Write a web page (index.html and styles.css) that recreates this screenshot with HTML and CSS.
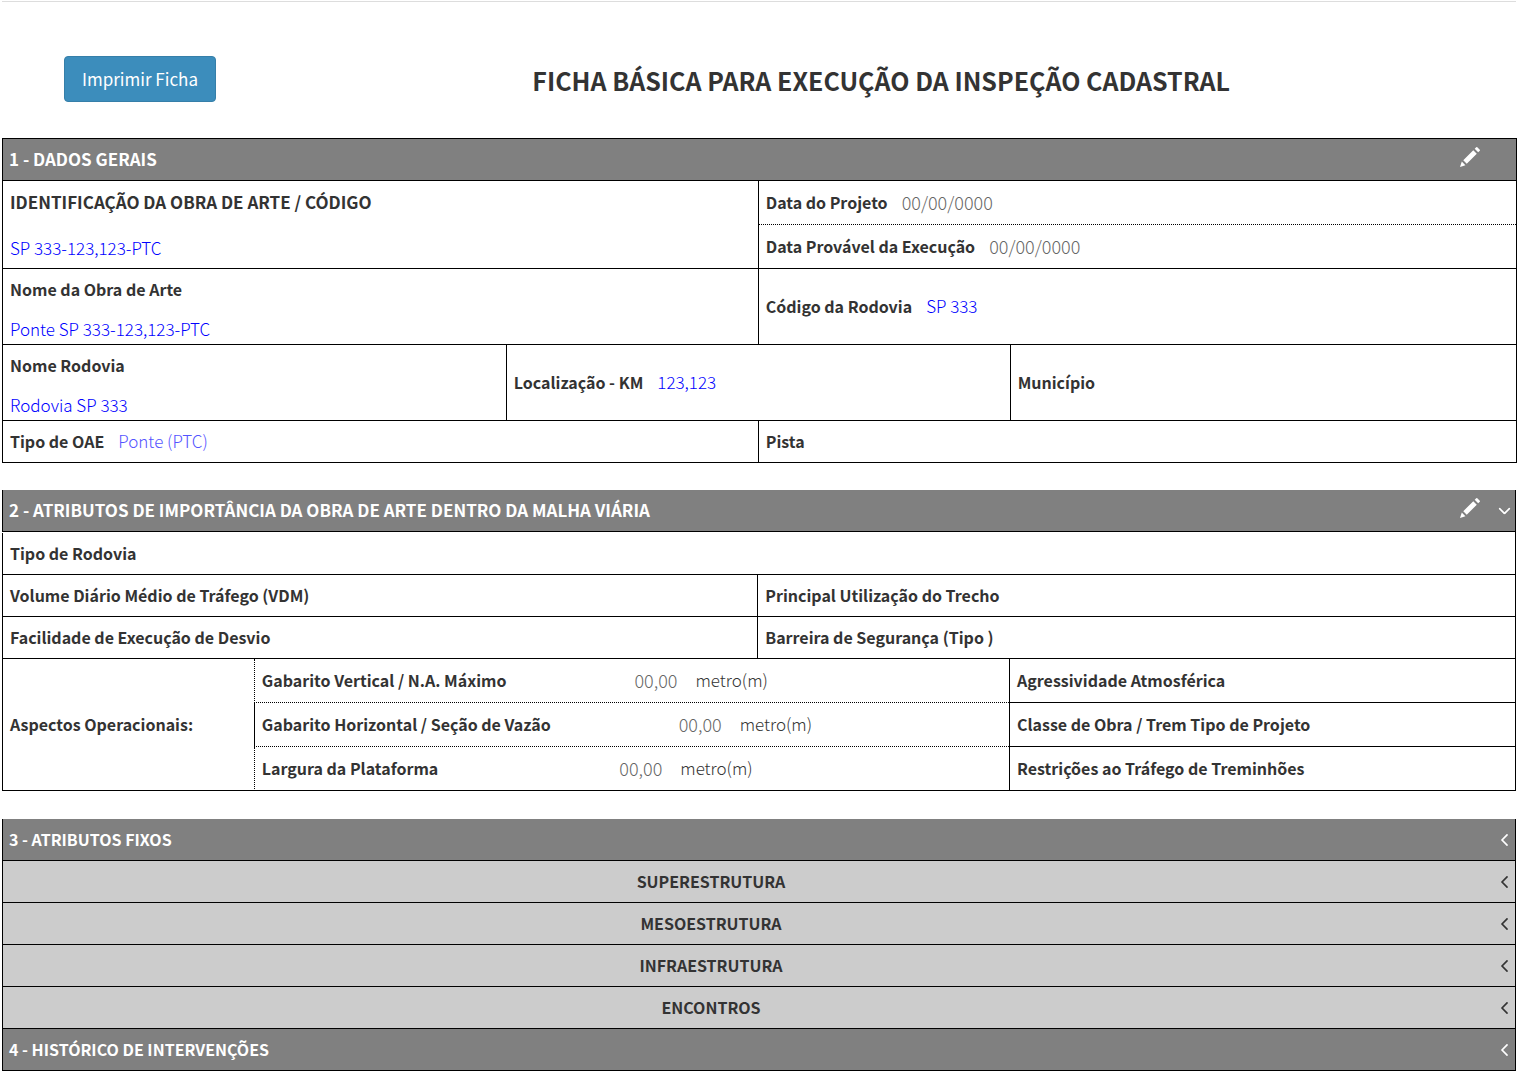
FILE: index.html
```html
<!DOCTYPE html>
<html lang="pt-BR">
<head>
<meta charset="utf-8">
<meta name="viewport" content="width=device-width, initial-scale=1">
<title>Ficha Básica - Inspeção Cadastral</title>
<link rel="stylesheet" href="styles.css">
</head>
<body>
<svg class="sprite" aria-hidden="true">
  <symbol id="pencil" viewBox="-16 -1210 1226 1226"><path transform="scale(1 -1)" d="M1011 1210q19 0 33 -13l153 -153q13 -14 13 -33t-13 -33l-99 -92l-214 214l95 96q13 14 32 14zM1013 800l-615 -614l-214 214l614 614zM317 96l-333 -112l110 335z"/></symbol>
  <symbol id="angle-left" viewBox="45 -1075 582 998"><path transform="scale(1 -1)" d="M627 992q0 -13 -10 -23l-393 -393l393 -393q10 -10 10 -23t-10 -23l-50 -50q-10 -10 -23 -10t-23 10l-466 466q-10 10 -10 23t10 23l466 466q10 10 23 10t23 -10l50 -50q10 -10 10 -23z"/></symbol>
</svg>
<main class="page">
  <header class="top">
    <div class="print"><button class="btn" type="button">Imprimir Ficha</button></div>
    <h1>FICHA BÁSICA PARA EXECUÇÃO DA INSPEÇÃO CADASTRAL</h1>
  </header>

  <section class="sheet general">
    <div class="bar">
      <h2 class="large">1 - DADOS GERAIS</h2>
      <button class="icon edit" type="button" aria-label="Editar"><svg><use href="#pencil"/></svg></button>
    </div>
    <div class="grid">
      <div class="cell half two-lines tall stacked">
        <label class="large" for="codigo">IDENTIFICAÇÃO DA OBRA DE ARTE / CÓDIGO</label>
        <input id="codigo" class="value" value="SP 333-123,123-PTC">
      </div>
      <div class="half split">
        <div class="cell line dotted"><label for="projeto">Data do Projeto</label><input id="projeto" class="value" placeholder="00/00/0000"></div>
        <div class="cell line"><label for="execucao">Data Provável da Execução</label><input id="execucao" class="value" placeholder="00/00/0000"></div>
      </div>
      <div class="cell half two-lines stacked">
        <label for="nome">Nome da Obra de Arte</label>
        <input id="nome" class="value" value="Ponte SP 333-123,123-PTC">
      </div>
      <div class="cell half"><label for="rodovia">Código da Rodovia</label><input id="rodovia" class="value" value="SP 333"></div>
      <div class="cell third two-lines stacked">
        <label for="nome-rodovia">Nome Rodovia</label>
        <input id="nome-rodovia" class="value" value="Rodovia SP 333">
      </div>
      <div class="cell third"><label for="km">Localização - KM</label><input id="km" class="value" value="123,123"></div>
      <div class="cell third"><span class="name">Município</span></div>
      <div class="cell half"><label for="tipo">Tipo de OAE</label><input id="tipo" class="value" value="Ponte (PTC)" disabled></div>
      <div class="cell half"><span class="name">Pista</span></div>
    </div>
  </section>

  <section class="sheet">
    <div class="bar detached">
      <h2 class="large">2 - ATRIBUTOS DE IMPORTÂNCIA DA OBRA DE ARTE DENTRO DA MALHA VIÁRIA</h2>
      <button class="icon edit" type="button" aria-label="Editar"><svg><use href="#pencil"/></svg></button>
      <button class="icon angle open" type="button" aria-label="Recolher"><svg><use href="#angle-left"/></svg></button>
    </div>
    <div class="grid">
      <div class="cell full"><span class="name">Tipo de Rodovia</span></div>
      <div class="cell half"><span class="name">Volume Diário Médio de Tráfego (VDM)</span></div>
      <div class="cell half"><span class="name">Principal Utilização do Trecho</span></div>
      <div class="cell half"><span class="name">Facilidade de Execução de Desvio</span></div>
      <div class="cell half"><span class="name">Barreira de Segurança (Tipo )</span></div>
      <div class="cell sixth"><span class="name">Aspectos Operacionais:</span></div>
      <div class="half split">
        <div class="cell line dotted dotted-side"><label for="vertical">Gabarito Vertical / N.A. Máximo</label><input id="vertical" class="value measure" placeholder="00,00"><span class="unit">metro(m)</span></div>
        <div class="cell line dotted"><label for="horizontal">Gabarito Horizontal / Seção de Vazão</label><input id="horizontal" class="value measure" placeholder="00,00"><span class="unit">metro(m)</span></div>
        <div class="cell line dotted-side"><label for="largura">Largura da Plataforma</label><input id="largura" class="value measure wide" placeholder="00,00"><span class="unit">metro(m)</span></div>
      </div>
      <div class="third split">
        <div class="cell line"><span class="name">Agressividade Atmosférica</span></div>
        <div class="cell line"><span class="name">Classe de Obra / Trem Tipo de Projeto</span></div>
        <div class="cell line"><span class="name">Restrições ao Tráfego de Treminhões</span></div>
      </div>
    </div>
  </section>

  <section class="sheet">
    <div class="bar">
      <h2>3 - ATRIBUTOS FIXOS</h2>
      <button class="icon angle" type="button" aria-label="Expandir"><svg><use href="#angle-left"/></svg></button>
    </div>
    <div class="bar sub">
      <h3>SUPERESTRUTURA</h3>
      <button class="icon angle" type="button" aria-label="Expandir"><svg><use href="#angle-left"/></svg></button>
    </div>
    <div class="bar sub">
      <h3>MESOESTRUTURA</h3>
      <button class="icon angle" type="button" aria-label="Expandir"><svg><use href="#angle-left"/></svg></button>
    </div>
    <div class="bar sub">
      <h3>INFRAESTRUTURA</h3>
      <button class="icon angle" type="button" aria-label="Expandir"><svg><use href="#angle-left"/></svg></button>
    </div>
    <div class="bar sub">
      <h3>ENCONTROS</h3>
      <button class="icon angle" type="button" aria-label="Expandir"><svg><use href="#angle-left"/></svg></button>
    </div>
    <div class="bar">
      <h2>4 - HISTÓRICO DE INTERVENÇÕES</h2>
      <button class="icon angle" type="button" aria-label="Expandir"><svg><use href="#angle-left"/></svg></button>
    </div>
  </section>
</main>
</body>
</html>
```
FILE: styles.css
```css
* { box-sizing: border-box; }

body {
  margin: 0;
  background: #fff;
  color: #333;
  font: 17px/24px "Noto Sans CJK SC", "Liberation Sans", sans-serif;
}

.sprite { display: none; }

.page { padding: 1px 11px 14px 2px; }

/* page heading */
.top {
  display: grid;
  grid-template-columns: 1fr 5fr;
  align-items: start;
  padding: 54px 0 36px;
  border-top: 1px solid #ddd;
}

.print { padding-left: 62px; }

.btn {
  height: 46px;
  padding: 0 17px;
  border: 1px solid #367fa9;
  border-radius: 4px;
  background: #3c8dbc;
  color: #fff;
  font: 17px/24px "Noto Sans CJK SC", sans-serif;
  white-space: nowrap;
}

h1 {
  margin: 6px 8px 0 0;
  font: bold 25px/36px "Noto Sans CJK SC", sans-serif;
  text-align: center;
}

/* sheets */
.sheet {
  margin-bottom: 28px;
  border-right: 1px solid #000;
}

.sheet:last-child { margin-bottom: 0; }

.general {
  margin: 0 -1px 27px 0;
  border-top: 1px solid #000;
}

.bar {
  display: flex;
  align-items: center;
  height: 42px;
  padding: 0 7px 0 6px;
  border-left: 1px solid #000;
  border-bottom: 1px solid #000;
  background: #808080;
  color: #fff;
}

.detached { margin-bottom: 1px; }

h2, h3 {
  flex: 1;
  margin: 0;
  padding-bottom: 2px;
  font-size: 16px;
  line-height: 24px;
  font-weight: bold;
}

.sub {
  background: #ccc;
  color: #333;
}

h3 {
  padding-right: 88px;
  text-align: center;
}

.icon {
  display: flex;
  justify-content: center;
  padding: 0;
  border: 0;
  background: none;
  color: inherit;
}

.icon svg { fill: currentColor; }

.edit { margin: 0 29px 6px 0; }
.edit svg { width: 20px; height: 20px; }
.edit:not(:last-child) { margin-right: 21px; }

.angle svg { width: 7px; height: 12px; }
.open svg { transform: rotate(-90deg); }

.grid {
  display: grid;
  grid-template-columns: repeat(11, 8.32%) 1fr;
}

.full { grid-column: span 12; }
.half { grid-column: span 6; }
.third { grid-column: span 4; }
.sixth { grid-column: span 2; }

.split { display: grid; }

.cell {
  display: flex;
  align-items: center;
  min-height: 42px;
  padding: 0 7px 2px;
  border-left: 1px solid #000;
  border-bottom: 1px solid #000;
}

.line { min-height: 44px; }
.dotted { border-bottom-style: dotted; }
.dotted-side { border-left-style: dotted; }

.stacked {
  flex-direction: column;
  align-items: stretch;
  justify-content: space-between;
}

.two-lines { min-height: 76px; padding-top: 8px; padding-bottom: 3px; }
.tall { padding-top: 9px; padding-bottom: 8px; }

label, .name {
  font-size: 16px;
  font-weight: bold;
  white-space: nowrap;
}

.large { font-size: 17px; }

.unit { font-weight: 300; }

.value {
  width: 240px;
  height: 24px;
  padding: 0;
  border: 0;
  background: none;
  color: #00f;
  font: inherit;
  font-weight: 300;
  outline: 0;
}

.value:placeholder-shown { font-size: 18px; }

.cell:not(.stacked) > .value { margin-left: 14px; }
.value:disabled { color: #5454ff; opacity: 1; }
.value::placeholder { color: #666; opacity: 1; }

.cell > .measure.measure {
  width: 61px;
  margin-left: 128px;
}

.cell > .wide.wide { margin-left: 181px; }
```
